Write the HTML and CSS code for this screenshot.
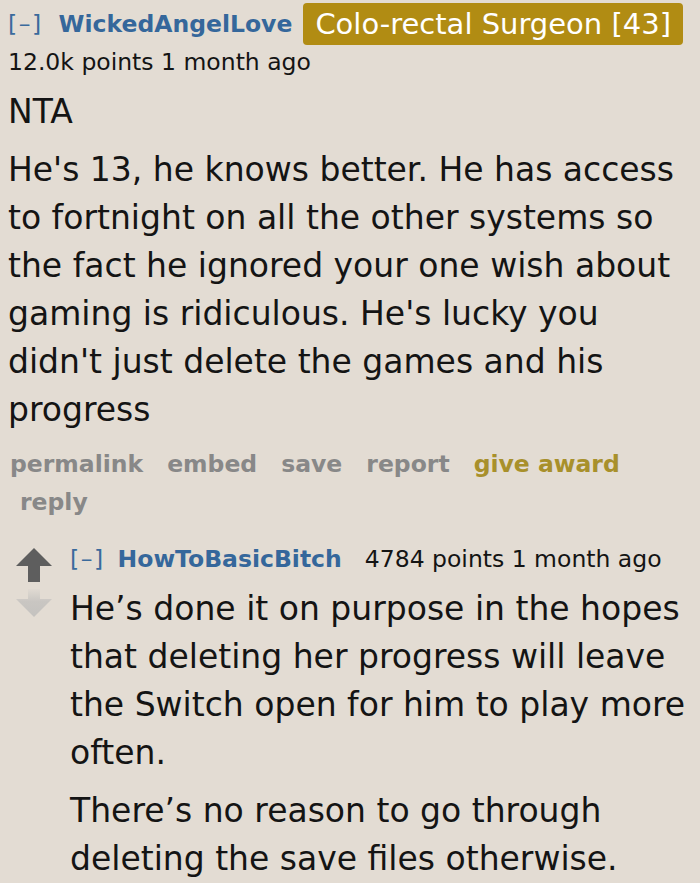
FILE: index.html
```html
<!DOCTYPE html>
<html lang="en">
<head>
<meta charset="utf-8">
<title>Comment</title>
<link rel="stylesheet" href="styles.css">
</head>
<body>
<div class="comment">
  <div class="tagline">
    <span class="expand">[–]</span>
    <span class="author">WickedAngelLove</span>
    <span class="flair">Colo-rectal Surgeon [43]</span>
  </div>
  <div class="meta">12.0k points 1 month ago</div>
  <div class="md">
    <p>NTA</p>
    <p>He's 13, he knows better. He has access to fortnight on all the other systems so the fact he ignored your one wish about gaming is ridiculous. He's lucky you didn't just delete the games and his progress</p>
  </div>
  <ul class="buttons">
    <li>permalink</li>
    <li>embed</li>
    <li>save</li>
    <li>report</li>
    <li class="award">give award</li>
    <li>reply</li>
  </ul>
  <div class="child">
    <div class="votes">
      <svg class="arrow up" width="36" height="34" viewBox="0 0 36 34"><polygon points="18,0 36,18 24,18 24,34 12,34 12,18 0,18"/></svg>
      <svg class="arrow down" width="36" height="28" viewBox="0 0 36 28"><defs><linearGradient id="fade" x1="0" y1="0" x2="0" y2="1"><stop offset="0" stop-color="#e0dad2"/><stop offset="0.45" stop-color="#c9c6c2"/><stop offset="1" stop-color="#c4c2bf"/></linearGradient></defs><polygon fill="url(#fade)" points="12,0 24,0 24,10 36,10 18,28 0,10 12,10"/></svg>
    </div>
    <div class="entry">
      <div class="tagline small">
        <span class="expand">[–]</span>
        <span class="author">HowToBasicBitch</span>
        <span class="score">4784 points 1 month ago</span>
      </div>
      <div class="md">
        <p>He’s done it on purpose in the hopes that deleting her progress will leave the Switch open for him to play more often.</p>
        <p>There’s no reason to go through deleting the save files otherwise.</p>
      </div>
    </div>
  </div>
</div>
</body>
</html>
```

FILE: styles.css
```css
html, body {
  margin: 0;
  padding: 0;
  background: #e3dcd3;
}

body {
  font-family: "DejaVu Sans", Verdana, sans-serif;
  color: #141414;
  overflow: hidden;
}

.comment {
  padding: 3px 0 0 8px;
}

.tagline {
  display: flex;
  align-items: center;
  height: 42px;
  font-size: 23.5px;
  white-space: nowrap;
}

.expand {
  color: #3a6a9c;
  margin-right: 16px;
  letter-spacing: 1.5px;
}

.author {
  color: #35679b;
  font-weight: bold;
  margin-right: 11px;
}

.flair {
  background: #b18c13;
  color: #ffffff;
  font-size: 29px;
  line-height: 42px;
  padding: 0 12px;
  border-radius: 4px;
}

.meta {
  margin-top: 3px;
  font-size: 23.5px;
  line-height: 28px;
}

.md {
  font-size: 33px;
  line-height: 48px;
  margin-top: 12px;
}

.md p {
  margin: 0 0 10px 0;
}

.md p:last-child {
  margin-bottom: 0;
}

.buttons {
  list-style: none;
  margin: 11px 0 0 0;
  padding: 0;
  display: flex;
  flex-wrap: wrap;
  font-size: 23.5px;
  font-weight: bold;
  line-height: 38px;
  color: #888888;
}

.buttons li {
  padding: 0 12px;
}

.buttons li:first-child {
  padding-left: 2px;
}

.buttons .award {
  color: #a8902b;
}

.child {
  display: flex;
  margin-top: 19px;
}

.votes {
  width: 62px;
  flex: none;
  display: flex;
  flex-direction: column;
  padding-top: 8px;
}

.arrow {
  display: block;
  margin-left: 8px;
}

.arrow.up {
  fill: #5e5e5e;
}

.arrow.down {
  margin-top: 7px;
}

.entry {
  flex: 1;
  min-width: 0;
}

.tagline.small {
  height: 38px;
}

.tagline.small .expand {
  margin-right: 13px;
}

.tagline.small .author {
  margin-right: 23px;
}

.entry .md {
  margin-top: 7px;
}
```
